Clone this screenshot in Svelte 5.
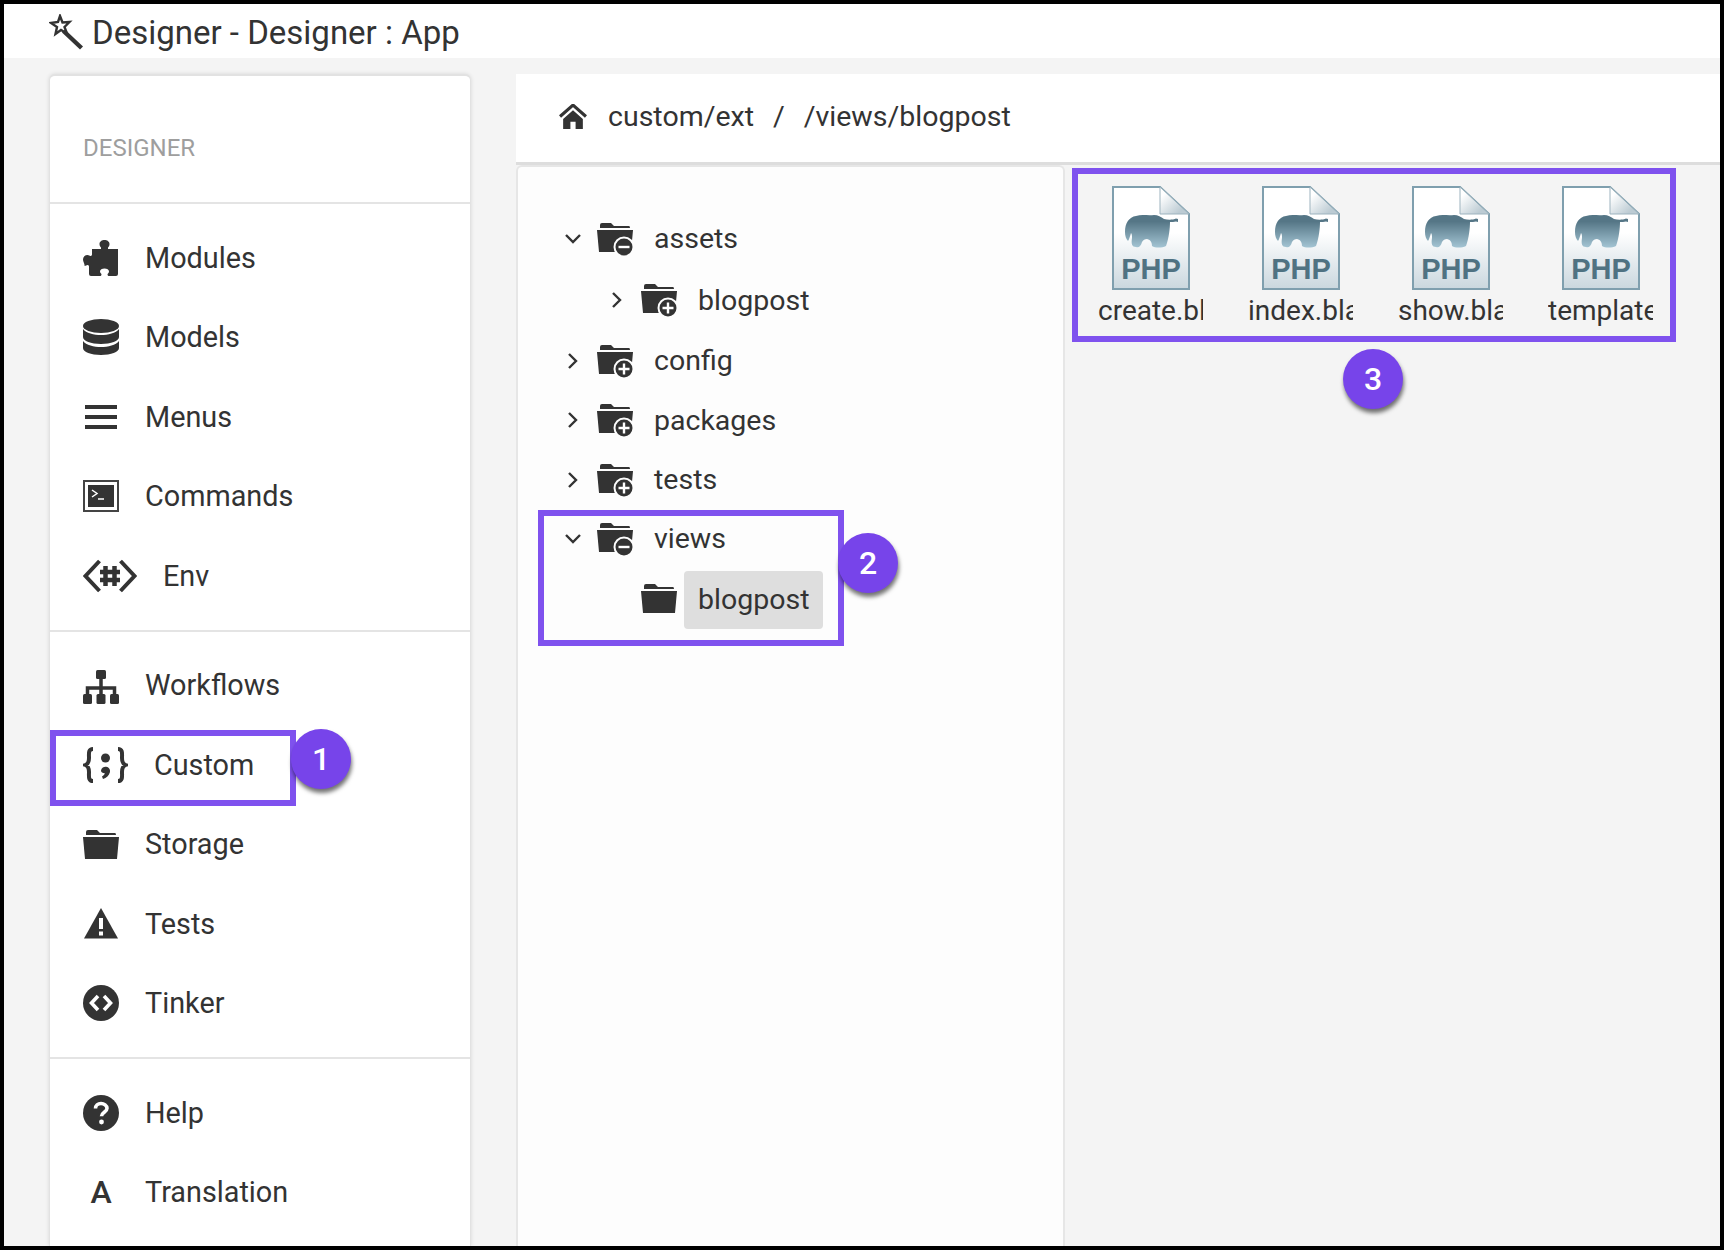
<script>
	// Sidebar groups, icon names map to the snippet below
	const groups = [
		['Modules', 'Models', 'Menus', 'Commands', 'Env'],
		['Workflows', 'Custom', 'Storage', 'Tests', 'Tinker'],
		['Help', 'Translation']
	];

	// Folder tree, state: open / closed / leaf
	const tree = [
		{ name: 'assets', state: 'open', depth: 0 },
		{ name: 'blogpost', state: 'closed', depth: 1 },
		{ name: 'config', state: 'closed', depth: 0 },
		{ name: 'packages', state: 'closed', depth: 0 },
		{ name: 'tests', state: 'closed', depth: 0 },
		{ name: 'views', state: 'open', depth: 0 },
		{ name: 'blogpost', state: 'leaf', depth: 1, selected: true }
	];

	const files = ['create.blade.php', 'index.blade.php', 'show.blade.php', 'template.blade.php'];
</script>

{#snippet folderShape()}
	<path d="M3 5V3q0-2 2-2h9l3 3h15q1 0 1 2H3z" />
	<path d="M0 8h36l-2 22H2z" />
{/snippet}

{#snippet navIcon(name)}
	{#if name === 'Modules'}
		<svg class="ic" width="36" height="36" viewBox="0 0 36 36">
			<path d="M9 9h9V7.500C17 6.500 16.500 5.500 16.500 4c0-2.500 2.500-4 5-4s5 1.500 5 4c0 1.500-.5 2.500-1.500 3.500V9h10v25q0 2-2 2h-7c-1 0-1.500-.7-1.500-1.500 0-1 1.500-1.500 1.500-3 0-2-2-3-4.500-3s-4.500 1-4.500 3c0 1.500 1.500 2 1.500 3 0 .8-.5 1.500-1.500 1.500h-9q-2 0-2-2v-7.500c0-.8-.7-1.500-1.500-1.500-1 0-1.500 1-3 1C2 24 0 22 0 19.500S2 15 4.500 15c1.500 0 2 1 3 1 .8 0 1.500-.7 1.500-1.500z" />
		</svg>
	{:else if name === 'Models'}
		<svg class="ic" width="36" height="36" viewBox="0 0 36 36">
			<ellipse cx="18" cy="7" rx="18" ry="7" />
			<path d="M0 11c3 4 11 6 18 6s15-2 18-6v8c0 4-8 7-18 7S0 23 0 19z" transform="translate(0 -1)" />
			<path d="M0 22c3 4 11 6 18 6s15-2 18-6v7c0 4-8 7-18 7S0 33 0 29z" />
		</svg>
	{:else if name === 'Menus'}
		<svg class="ic" width="36" height="36" viewBox="0 0 36 36">
			<path d="M2 6h32v4H2zM2 16h32v4H2zM2 26h32v4H2z" />
		</svg>
	{:else if name === 'Commands'}
		<svg class="ic" width="36" height="32" viewBox="0 0 36 32">
			<rect x="1" y="1" width="34" height="30" fill="none" stroke="#444" stroke-width="2" />
			<rect x="5" y="5" width="26" height="22" />
			<path d="M9 10l5 3.500-5 3.500M15 19h6" fill="none" stroke="#fff" stroke-width="1.500" />
		</svg>
	{:else if name === 'Env'}
		<svg class="ic" width="54" height="34" viewBox="0 0 54 34">
			<path d="M16.500 2L2.500 17l14 15M37.500 2l14 15-14 15" fill="none" stroke="#333" stroke-width="4" />
			<path d="M22.500 7v20M31.500 7v20M17 13h20M17 21h20" fill="none" stroke="#333" stroke-width="4.500" />
		</svg>
	{:else if name === 'Workflows'}
		<svg class="ic shifted" width="36" height="34" viewBox="0 0 36 34">
			<rect x="13" y="0" width="10" height="9" rx="1.500" />
			<rect x="0" y="24" width="9" height="10" rx="1.500" />
			<rect x="13.500" y="24" width="9" height="10" rx="1.500" />
			<rect x="27" y="24" width="9" height="10" rx="1.500" />
			<path d="M18 8v17M4.500 25v-7h27v7" fill="none" stroke="#333" stroke-width="3.500" />
		</svg>
	{:else if name === 'Custom'}
		<svg class="ic" width="45" height="36" viewBox="0 0 45 36">
			<path d="M10 2C5 2 6 7 6 11c0 4-1 6-3.500 7C5 19 6 21 6 25c0 4-1 9 4 9M35 2c5 0 4 5 4 9 0 4 1 6 3.500 7-2.500 1-3.500 3-3.500 7 0 4 1 9-4 9" fill="none" stroke="#333" stroke-width="4" />
			<circle cx="22.500" cy="11" r="4.500" />
			<path d="M18 23.500a4.500 4.500 0 1 1 9 1.500c-1 3.500-3.500 6-7 7l-1-2.500c1.500-.8 2.500-2 2.800-3.200-2.300 0-3.800-1-3.800-2.800z" />
		</svg>
	{:else if name === 'Storage'}
		<svg class="ic" width="36" height="31" viewBox="0 0 36 31">
			{@render folderShape()}
		</svg>
	{:else if name === 'Tests'}
		<svg class="ic" width="36" height="31" viewBox="0 0 36 31">
			<path d="M18 0l17 30.500H1z" />
			<path d="M16 10h4v11h-4zM16 23.500h4v4h-4z" fill="#fff" />
		</svg>
	{:else if name === 'Tinker'}
		<svg class="ic" width="36" height="36" viewBox="0 0 36 36">
			<circle cx="18" cy="18" r="18" />
			<path d="M15 11l-6.500 7 6.500 7M21 11l6.500 7-6.500 7" fill="none" stroke="#fff" stroke-width="3.600" />
		</svg>
	{:else if name === 'Help'}
		<svg class="ic" width="36" height="36" viewBox="0 0 36 36">
			<circle cx="18" cy="18" r="18" />
			<path d="M12.500 13.500c0-3 2.500-5 5.500-5s6 2 6 4.800c0 4-5.500 4-5.500 8" fill="none" stroke="#fff" stroke-width="3.600" />
			<circle cx="18.500" cy="27" r="2.400" fill="#fff" />
		</svg>
	{:else if name === 'Translation'}
		<span class="ic letter">A</span>
	{/if}
{/snippet}

{#snippet treeFolder(state)}
	<svg class="folder" width="36" height="34" viewBox="0 0 36 34">
		{@render folderShape()}
		{#if state !== 'leaf'}
			<circle cx="27" cy="25" r="9.500" stroke="#fdfdfd" stroke-width="2" />
			<path d={state === 'open' ? 'M21.500 25h11' : 'M21.500 25h11M27 19.500v11'} fill="none" stroke="#fff" stroke-width="2.400" />
		{/if}
	</svg>
{/snippet}

{#snippet phpIcon(i)}
	<svg width="78" height="104" viewBox="0 0 78 104">
		<defs>
			<linearGradient id="page{i}" x1="0" y1="0" x2="0" y2="1">
				<stop offset="0.45" stop-color="#ffffff" />
				<stop offset="1" stop-color="#cad7de" />
			</linearGradient>
			<linearGradient id="fold{i}" x1="0" y1="0" x2="1" y2="1">
				<stop offset="0.2" stop-color="#ffffff" />
				<stop offset="0.8" stop-color="#bccbd3" />
			</linearGradient>
			<linearGradient id="ele{i}" x1="0" y1="0" x2="0" y2="1">
				<stop offset="0.2" stop-color="#557686" />
				<stop offset="1" stop-color="#a3c4d3" />
			</linearGradient>
		</defs>
		<path d="M1 1h47l29 27v75H1z" fill="url(#page{i})" stroke="#7f9fae" stroke-width="2" />
		<path d="M48 1v27h29z" fill="url(#fold{i})" stroke="#9db3be" stroke-width="1" />
		<path d="M13 46C13 37 17 31 24 30C30 28 36 30 42 29C46 29 49 31 52 33C56 34 61 34 64 32.500L66 33L66 36L64 35.500C62 36 60 36 58 36C58 42 57 52 54 60C50 62 43 62 40 60C40 57 39 54 35 53C33 53 31 54 30 56C29 60 27 62 24 61C20 61 19 58 20 52C20 50 20 48 19 47C18 50 17 54 16 55C14 53 13 50 13 46Z" fill="url(#ele{i})" />
		<text class="php" x="39" y="93" text-anchor="middle">PHP</text>
	</svg>
{/snippet}

<div class="frame">
	<header class="titlebar">
		<svg width="36" height="36" viewBox="0 0 36 36">
			<path d="M11 2l2.500 6.500 7-.5-5 5 2.500 6.500-6-3.500-5.500 4 1.500-7L2 9l7-1z" fill="none" stroke="#333" stroke-width="2.400" />
			<path d="M16 15.500l18 17-3 3-18-17z" fill="#333" />
		</svg>
		<span>Designer - Designer : App</span>
	</header>

	<div class="main">
		<aside class="sidebar">
			<div class="brand">DESIGNER</div>
			{#each groups as group}
				<nav class="group">
					{#each group as name}
						<div class="item">
							{@render navIcon(name)}
							<span>{name}</span>
						</div>
					{/each}
				</nav>
			{/each}
		</aside>

		<section class="content">
			<div class="crumbs">
				<svg class="home" width="28" height="25" viewBox="0 0 27 24">
					<path d="M1 12L13.500 1 26 12" fill="none" stroke="#333" stroke-width="3" />
					<path d="M4 14.500l9.500-8.500 9.500 8.500V24h-7v-7h-5v7H4z" />
				</svg>
				<span>custom/ext</span>
				<span class="sep">/</span>
				<span>/views/blogpost</span>
			</div>

			<div class="panes">
				<div class="tree">
					{#each tree as row}
						<div class="row" class:nested={row.depth === 1}>
							{#if row.state === 'open'}
								<svg class="chev" width="18" height="18" viewBox="0 0 18 18">
									<path d="M2 5l7 7 7-7" />
								</svg>
							{:else if row.state === 'closed'}
								<svg class="chev" width="18" height="18" viewBox="0 0 18 18">
									<path d="M5 2l7 7-7 7" />
								</svg>
							{:else}
								<span class="chev"></span>
							{/if}
							{@render treeFolder(row.state)}
							<span class="label" class:selected={row.selected}>{row.name}</span>
						</div>
					{/each}
				</div>

				<div class="files">
					{#each files as file, i}
						<div class="file">
							{@render phpIcon(i)}
							<div class="fname">{file}</div>
						</div>
					{/each}
				</div>
			</div>
		</section>
	</div>

	<!-- Annotations lying over the screenshot -->
	<div class="mark m1"></div>
	<div class="mark m2"></div>
	<div class="mark m3"></div>
	<div class="badge b1">1</div>
	<div class="badge b2">2</div>
	<div class="badge b3">3</div>
</div>

<style>
	.frame {
		position: relative;
		box-sizing: border-box;
		width: 1724px;
		height: 1250px;
		border: 4px solid #000;
		background: #f4f4f4;
		overflow: hidden;
		display: flex;
		flex-direction: column;
		font-family: Roboto, sans-serif;
		color: #333;
		fill: #333;
	}

	.titlebar {
		height: 54px;
		box-sizing: border-box;
		padding: 2px 0 0 45px;
		flex: none;
		background: #fff;
		display: flex;
		align-items: center;
		gap: 7px;
		font-size: 33px;
	}

	.main {
		flex: 1;
		display: flex;
		min-height: 0;
		padding-top: 16px;
	}

	.sidebar {
		width: 420px;
		margin-left: 45px;
		flex: none;
		background: #fff;
		border: 1px solid #e2e2e2;
		border-top-width: 2px;
		border-bottom: none;
		border-radius: 6px 6px 0 0;
		box-shadow: 0 0 4px rgba(0, 0, 0, 0.12);
	}

	.brand {
		height: 126px;
		box-sizing: border-box;
		padding: 18px 0 0 33px;
		display: flex;
		align-items: center;
		font-size: 24px;
		color: #9e9e9e;
	}

	.group {
		border-top: 2px solid #e4e4e4;
		padding: 14px 0;
	}

	.item {
		height: 79.500px;
		display: flex;
		align-items: center;
		gap: 26px;
		padding-left: 33px;
		font-size: 28.800px;
	}

	.ic {
		flex: none;
	}

	.ic.shifted {
		position: relative;
		top: 2px;
	}

	.letter {
		width: 36px;
		text-align: center;
		font-size: 32px;
		font-weight: 500;
	}

	.content {
		flex: 1;
		margin-left: 45px;
		min-width: 0;
		display: flex;
		flex-direction: column;
	}

	.crumbs {
		height: 88px;
		box-sizing: content-box;
		flex: none;
		background: #fff;
		border-bottom: 3px solid #ddd;
		display: flex;
		align-items: center;
		padding-left: 43px;
		gap: 21px;
		font-size: 28.500px;
		line-height: 86px;
	}

	.crumbs span {
		height: 86px;
		align-self: flex-start;
	}

	.home {
		margin-top: -4px;
	}

	.sep {
		margin: 0 -2px;
	}

	.panes {
		flex: 1;
		display: flex;
		min-height: 0;
	}

	.tree {
		width: 549px;
		flex: none;
		box-sizing: border-box;
		background: #fdfdfd;
		border: 2px solid #e6e6e6;
		border-bottom: none;
		border-radius: 6px 6px 0 0;
		padding: 42px 0 0 46px;
		font-size: 28.500px;
	}

	.row {
		height: 59.300px;
		display: flex;
		align-items: center;
	}

	.row.nested {
		height: 62px;
		margin-top: 1px;
		padding-left: 44px;
	}

	.chev {
		width: 18px;
		height: 18px;
		flex: none;
		margin-right: 15px;
		fill: none;
		stroke: #333;
		stroke-width: 2.400;
	}

	.folder {
		flex: none;
		margin-right: 21px;
	}

	.label {
		padding: 0;
		border-radius: 4px;
	}

	.label.selected {
		background: #dedede;
		padding: 0 14px;
		margin-left: -14px;
		line-height: 58px;
	}

	.files {
		flex: 1;
		display: flex;
		align-items: flex-start;
		gap: 45px;
		padding: 21px 0 0 33px;
	}

	.file {
		width: 105px;
		display: flex;
		flex-direction: column;
		align-items: center;
	}

	.file svg {
		display: block;
	}

	.php {
		font-family: 'Liberation Sans', sans-serif;
		font-weight: 700;
		font-size: 29px;
		fill: #4f7282;
	}

	.fname {
		width: 105px;
		overflow: hidden;
		white-space: nowrap;
		font-size: 28px;
		line-height: 34px;
		margin-top: 4px;
	}

	.mark {
		position: absolute;
		box-sizing: border-box;
		border: 6px solid #7f52ee;
	}

	.m1 {
		left: 46px;
		top: 726px;
		width: 246px;
		height: 76px;
	}

	.m2 {
		left: 534px;
		top: 506px;
		width: 306px;
		height: 136px;
	}

	.m3 {
		left: 1068px;
		top: 164px;
		width: 604px;
		height: 174px;
	}

	.badge {
		position: absolute;
		width: 60px;
		height: 60px;
		border-radius: 50%;
		background: #7744ea;
		color: #fff;
		font-size: 32px;
		font-weight: 500;
		display: flex;
		align-items: center;
		justify-content: center;
		box-shadow: 1px 4px 4px rgba(0, 0, 0, 0.55);
	}

	.b1 {
		left: 287px;
		top: 725px;
	}

	.b2 {
		left: 834px;
		top: 529px;
	}

	.b3 {
		left: 1339px;
		top: 345px;
	}
</style>
